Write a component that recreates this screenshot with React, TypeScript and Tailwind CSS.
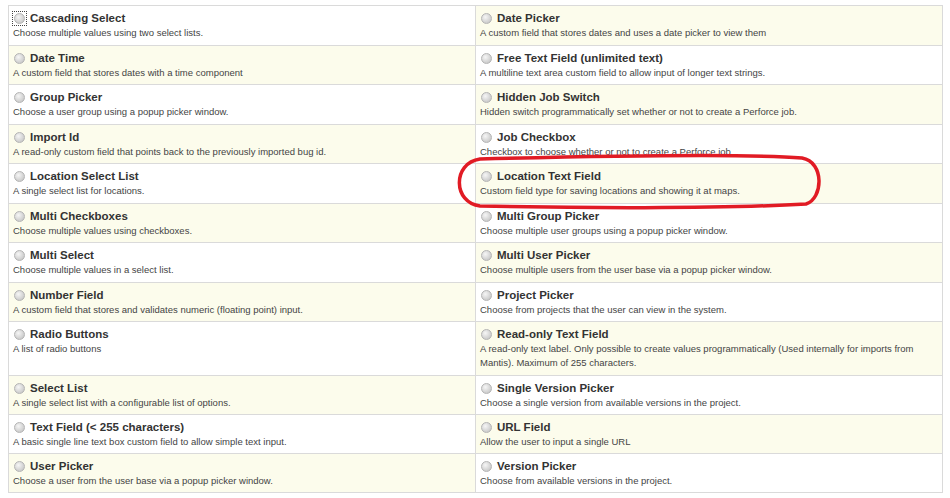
const fields = [
  { name: 'Cascading Select', desc: 'Choose multiple values using two select lists.', focus: true },
  { name: 'Date Picker', desc: 'A custom field that stores dates and uses a date picker to view them' },
  { name: 'Date Time', desc: 'A custom field that stores dates with a time component' },
  { name: 'Free Text Field (unlimited text)', desc: 'A multiline text area custom field to allow input of longer text strings.' },
  { name: 'Group Picker', desc: 'Choose a user group using a popup picker window.' },
  { name: 'Hidden Job Switch', desc: 'Hidden switch programmatically set whether or not to create a Perforce job.' },
  { name: 'Import Id', desc: 'A read-only custom field that points back to the previously imported bug id.' },
  { name: 'Job Checkbox', desc: 'Checkbox to choose whether or not to create a Perforce job.' },
  { name: 'Location Select List', desc: 'A single select list for locations.' },
  { name: 'Location Text Field', desc: 'Custom field type for saving locations and showing it at maps.' },
  { name: 'Multi Checkboxes', desc: 'Choose multiple values using checkboxes.' },
  { name: 'Multi Group Picker', desc: 'Choose multiple user groups using a popup picker window.' },
  { name: 'Multi Select', desc: 'Choose multiple values in a select list.' },
  { name: 'Multi User Picker', desc: 'Choose multiple users from the user base via a popup picker window.' },
  { name: 'Number Field', desc: 'A custom field that stores and validates numeric (floating point) input.' },
  { name: 'Project Picker', desc: 'Choose from projects that the user can view in the system.' },
  { name: 'Radio Buttons', desc: 'A list of radio buttons' },
  {
    name: 'Read-only Text Field',
    desc: 'A read-only text label. Only possible to create values programmatically (Used internally for imports from Mantis). Maximum of 255 characters.',
  },
  { name: 'Select List', desc: 'A single select list with a configurable list of options.' },
  { name: 'Single Version Picker', desc: 'Choose a single version from available versions in the project.' },
  { name: 'Text Field (< 255 characters)', desc: 'A basic single line text box custom field to allow simple text input.' },
  { name: 'URL Field', desc: 'Allow the user to input a single URL' },
  { name: 'User Picker', desc: 'Choose a user from the user base via a popup picker window.' },
  { name: 'Version Picker', desc: 'Choose from available versions in the project.' },
];

// row heights measured from the screenshot (bottom border included)
const rowHeights = ['h-[40px]', 'h-[39px]', 'h-[40px]', 'h-[39px]', 'h-[40px]', 'h-[39px]', 'h-[40px]', 'h-[39px]', 'h-[54px]', 'h-[39px]', 'h-[39px]', 'h-[39px]'];

const Radio = ({ focus }: { focus?: boolean }) => (
  <span
    className={
      'ml-[1px] flex h-[11px] w-[11px] shrink-0 items-center justify-center' +
      (focus ? ' outline outline-1 outline-dotted outline-offset-[1px] outline-[#444]' : '')
    }
  >
    <span className="h-[11px] w-[11px] rounded-full border border-[#b4b4b4] bg-[radial-gradient(circle_at_38%_35%,#f6f6f6_0%,#dcdcdc_45%,#bdbdbd_100%)]" />
  </span>
);

export default function App() {
  return (
    <div className="relative min-h-[498px] bg-white pl-[8px] pt-[5px] font-['Liberation_Sans',Arial,sans-serif]">
      <div className="grid w-[935px] grid-cols-2 border-l border-t border-[#dadada]">
        {fields.map((f, i) => {
          const row = Math.floor(i / 2);
          const col = i % 2;
          const yellow = (row + col) % 2 === 1;
          return (
            <div
              key={f.name}
              className={`${rowHeights[row]} border-b border-r border-[#dadada] pl-[4px] pr-[6px] pt-[4px] ${yellow ? 'bg-[#fcfcec]' : 'bg-white'}`}
            >
              <div className="flex h-[16px] items-center gap-[5px]">
                <Radio focus={f.focus} />
                <span className="text-[11.5px] font-bold leading-[16px] text-[#333]">{f.name}</span>
              </div>
              <div className="text-[9.5px] leading-[14px] text-[#444]">{f.desc}</div>
            </div>
          );
        })}
      </div>

      {/* red annotation around Location Text Field */}
      <svg className="pointer-events-none absolute left-0 top-0" width="950" height="498">
        <path
          d="M480 159 C600 156 740 153 802 158 C825 162 823 199 806 204 C720 209 570 208 480 206 C453 203 452 163 480 159 Z"
          fill="none"
          stroke="#e11b24"
          strokeWidth="3.5"
        />
      </svg>
    </div>
  );
}
